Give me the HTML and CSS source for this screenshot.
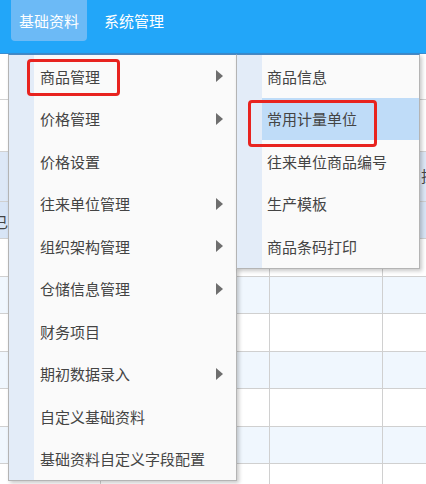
FILE: index.html
```html
<!DOCTYPE html>
<html>
<head>
  <title>基础资料</title>
  <link rel="stylesheet" href="styles.css">
</head>
<body>
  <div class="topbar">
    <div class="nav-item active">基础资料</div>
    <div class="nav-item">系统管理</div>
  </div>

  <div class="toolbar"></div>
  <div class="filter"></div>

  <!-- background grid, mostly hidden by the menus -->
  <div class="grid">
    <div class="grid-head">
      <div class="cell"></div><div class="cell"></div><div class="cell"></div><div class="cell head-text">挂账</div>
    </div>
    <div class="grid-head second">
      <div class="cell edge-text">已</div><div class="cell"></div><div class="cell"></div><div class="cell"></div>
    </div>
    <div class="grid-row"><div class="cell"></div><div class="cell"></div><div class="cell"></div><div class="cell"></div></div>
    <div class="grid-row alt"><div class="cell"></div><div class="cell"></div><div class="cell"></div><div class="cell"></div></div>
    <div class="grid-row"><div class="cell"></div><div class="cell"></div><div class="cell"></div><div class="cell"></div></div>
    <div class="grid-row alt"><div class="cell"></div><div class="cell"></div><div class="cell"></div><div class="cell"></div></div>
    <div class="grid-row"><div class="cell"></div><div class="cell"></div><div class="cell"></div><div class="cell"></div></div>
    <div class="grid-row alt"><div class="cell"></div><div class="cell"></div><div class="cell"></div><div class="cell"></div></div>
    <div class="grid-row"><div class="cell"></div><div class="cell"></div><div class="cell"></div><div class="cell"></div></div>
  </div>

  <!-- dropdown menus -->
  <div class="menu main-menu">
    <div class="menu-item">商品管理<span class="arrow"></span></div>
    <div class="menu-item">价格管理<span class="arrow"></span></div>
    <div class="menu-item">价格设置</div>
    <div class="menu-item">往来单位管理<span class="arrow"></span></div>
    <div class="menu-item">组织架构管理<span class="arrow"></span></div>
    <div class="menu-item">仓储信息管理<span class="arrow"></span></div>
    <div class="menu-item">财务项目</div>
    <div class="menu-item">期初数据录入<span class="arrow"></span></div>
    <div class="menu-item">自定义基础资料</div>
    <div class="menu-item">基础资料自定义字段配置</div>
  </div>

  <div class="menu sub-menu">
    <div class="menu-item">商品信息</div>
    <div class="menu-item hover">常用计量单位</div>
    <div class="menu-item">往来单位商品编号</div>
    <div class="menu-item">生产模板</div>
    <div class="menu-item">商品条码打印</div>
  </div>

  <!-- red annotation boxes -->
  <div class="mark mark-one"></div>
  <div class="mark mark-two"></div>
</body>
</html>
```

FILE: styles.css
```css
/* page */
* {
  box-sizing: border-box;
}

body {
  margin: 0;
  width: 426px;
  height: 484px;
  overflow: hidden;
  position: relative;
  font-family: "Noto Sans CJK SC", "Microsoft YaHei", sans-serif;
  font-size: 15px;
  color: #444;
  background-color: #fff;
}

/* top navigation */
.topbar {
  height: 54px;
  background-color: #22a6f9;
  border-bottom: 1px solid #3a8dd0;
  display: flex;
  gap: 9px;
  padding-left: 11px;
}

.nav-item {
  height: 41px;
  line-height: 41px;
  padding: 0 8px;
  color: #fff;
  border-radius: 0 0 4px 4px;
}

.nav-item.active {
  background-color: #6cbaf6;
}

.toolbar {
  height: 46px;
  border-bottom: 1px solid #d2d2d2;
}

.filter {
  height: 52px;
  border-bottom: 1px solid #d2d2d2;
}

/* grid behind the menus */
.grid {
  width: 520px;
}

.grid-head,
.grid-row {
  display: grid;
  grid-template-columns: 101px 169px 113px 1fr;
  border-bottom: 1px solid #d0d0d0;
}

.grid-head {
  height: 50px;
  background-color: #dde8f7;
}

.grid-head.second {
  height: 37px;
  background-color: #d8e5f6;
}

.grid-row {
  height: 37.5px;
}

.grid-row.alt {
  background-color: #f0f7fe;
}

.cell {
  border-right: 1px solid #d0d0d0;
}

.grid-head .cell {
  border-right: none;
}

.head-text {
  padding: 13px 0 0 38px;
}

.edge-text {
  padding: 9px 0 0 0;
  margin-left: -7px;
}

/* dropdown menus */
.menu {
  position: absolute;
  top: 54px;
  background: linear-gradient(to right, #e3ecf8 25px, #fafafa 25px);
  border: 1px solid #b4b4b4;
  border-top-color: #4a88c2;
  box-shadow: 2px 2px 4px rgba(0, 0, 0, 0.22);
}

.main-menu {
  left: 8px;
  width: 229px;
}

.sub-menu {
  left: 236px;
  width: 184px;
}

.menu-item {
  height: 42.5px;
  margin-left: 25px;
  padding: 0 13px 0 6px;
  display: flex;
  align-items: center;
  justify-content: space-between;
  white-space: nowrap;
}

.sub-menu .menu-item {
  padding-left: 5px;
}

.menu-item.hover {
  background-color: #bfdcf8;
}

.arrow {
  width: 0;
  height: 0;
  border-left: 7px solid #6e6e6e;
  border-top: 6px solid transparent;
  border-bottom: 6px solid transparent;
}

/* red annotation boxes */
.mark {
  position: absolute;
  border: 3px solid #e8231f;
  border-radius: 4px;
}

.mark-one {
  left: 27px;
  top: 59px;
  width: 93px;
  height: 37px;
}

.mark-two {
  left: 248px;
  top: 100px;
  width: 129px;
  height: 47px;
}
```
